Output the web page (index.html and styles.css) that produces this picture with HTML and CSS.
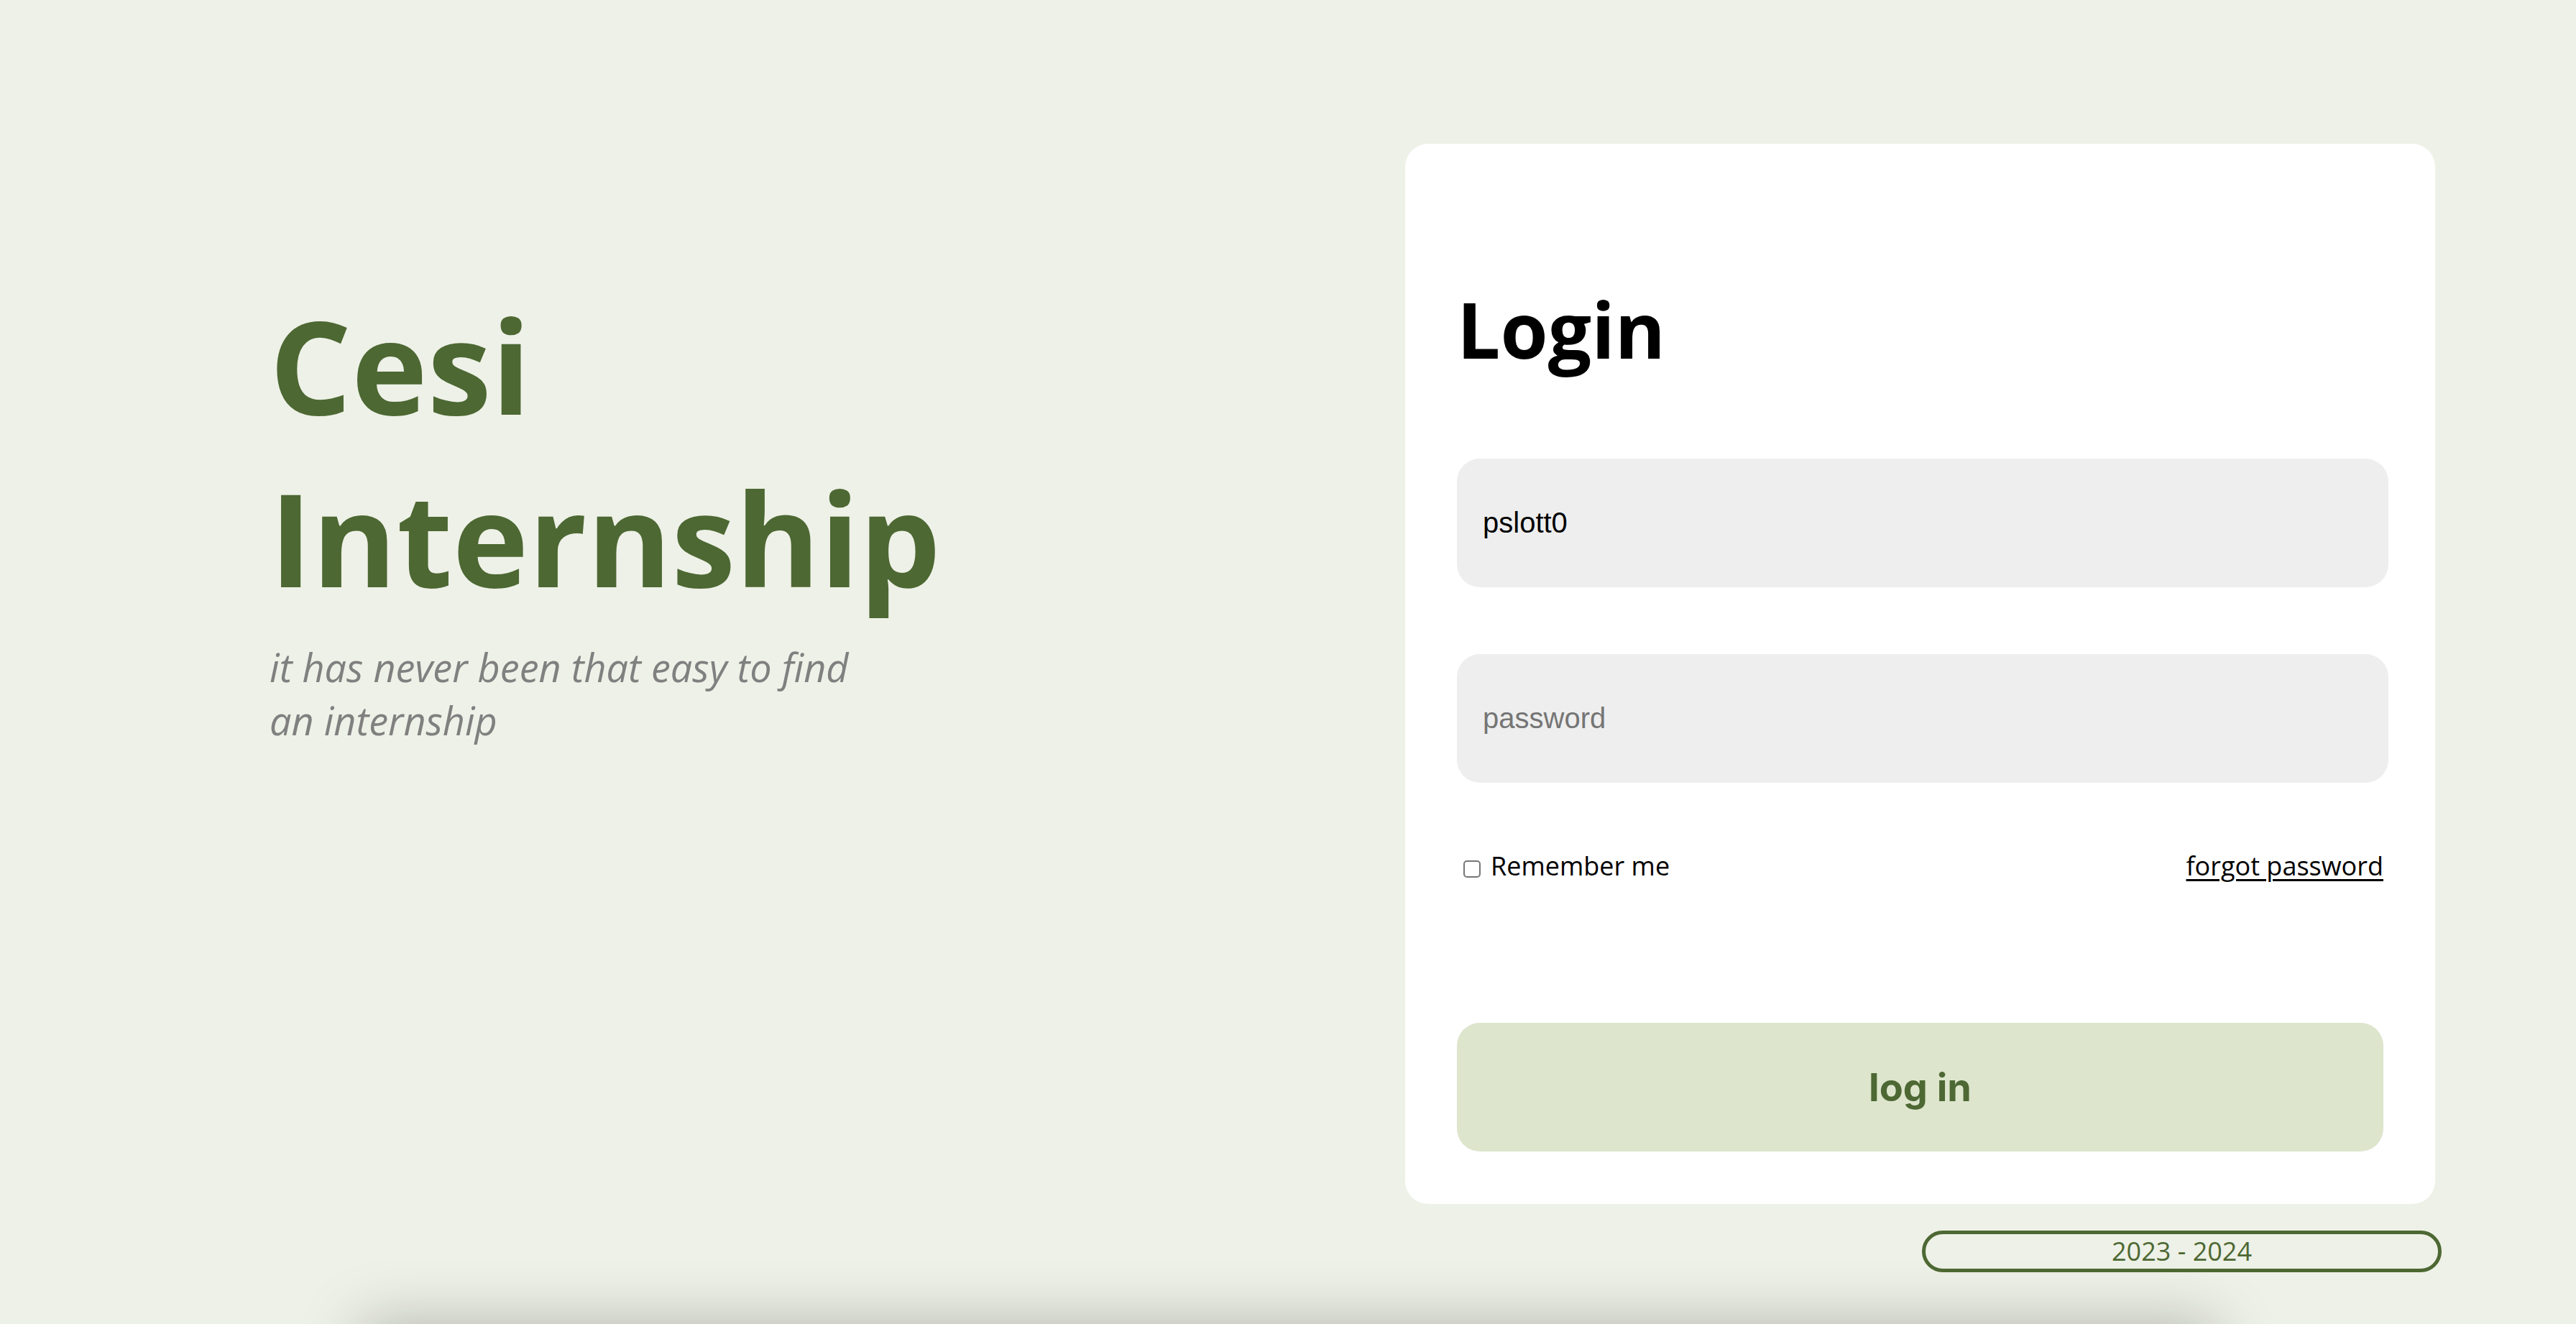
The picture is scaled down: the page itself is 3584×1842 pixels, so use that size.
FILE: index.html
```html
<!DOCTYPE html>
<html lang="en">
<head>
<meta charset="utf-8">
<title>Cesi Internship - Login</title>
<link rel="stylesheet" href="styles.css">
</head>
<body>
<main class="hero">
  <section class="intro">
    <h1 class="brand">Cesi<br>Internship</h1>
    <p class="tagline">it has never been that easy to find an internship</p>
  </section>
  <section class="side">
    <form class="card">
      <h2 class="card-title">Login</h2>
      <input class="field" type="text" value="pslott0">
      <input class="field" type="password" placeholder="password">
      <div class="options">
        <label class="remember"><input class="check" type="checkbox"><span>Remember me</span></label>
        <a class="forgot" href="#">forgot password</a>
      </div>
      <button class="submit" type="button">log in</button>
    </form>
    <div class="year">2023 - 2024</div>
  </section>
</main>
<footer class="fold"></footer>
</body>
</html>
```

FILE: styles.css
```css
* { box-sizing: border-box; }

html, body {
  margin: 0;
  padding: 0;
  background: #eef1e7;
  font-family: "Open Sans", "Noto Sans", sans-serif;
}

.hero {
  display: flex;
  height: 1842px;
}

.intro {
  flex: 1;
  padding: 388px 0 0 375px;
}

.brand {
  margin: 0;
  font-size: 179px;
  font-weight: 700;
  line-height: 240px;
  color: #4d6833;
}

.tagline {
  margin: 24px 0 0;
  max-width: 840px;
  font-size: 54px;
  font-style: italic;
  line-height: 73.5px;
  color: #808080;
}

.side {
  display: flex;
  flex-direction: column;
  width: 1442px;
  margin: 200px 187px 0 0;
}

.card {
  display: flex;
  flex-direction: column;
  width: 1433px;
  height: 1475px;
  padding: 183px 72px 73px;
  background: #ffffff;
  border-radius: 32px;
}

.card-title {
  margin: 0;
  font-size: 107px;
  font-weight: 700;
  line-height: 150px;
  color: #000000;
}

.field {
  width: calc(100% + 7px);
  height: 179px;
  margin: 105px 0 0;
  padding: 0 36px;
  border: none;
  border-radius: 32px;
  background: #eeeeee;
  font-family: "Liberation Sans", Arial, sans-serif;
  font-size: 40px;
  color: #000000;
  outline: none;
}

.field + .field { margin-top: 93px; }

.field::placeholder { color: #757575; }

.options {
  display: flex;
  justify-content: space-between;
  align-items: center;
  margin-top: 91px;
  height: 49px;
  font-size: 36px;
  line-height: 49px;
}

.remember {
  display: flex;
  align-items: center;
  gap: 14px;
  color: #000000;
}

.check {
  appearance: none;
  -webkit-appearance: none;
  width: 24px;
  height: 24px;
  margin: 8px 0 0 9px;
  border: 2px solid #767676;
  border-radius: 5px;
  background: #ffffff;
}

.forgot {
  color: #000000;
  text-decoration: underline;
  text-underline-offset: 5px;
  text-decoration-thickness: 3px;
}

.submit {
  margin-top: 194px;
  width: 100%;
  height: 179px;
  border: none;
  border-radius: 32px;
  background: #dde5cd;
  font-family: Inter, "Liberation Sans", sans-serif;
  font-size: 54px;
  font-weight: 700;
  color: #4d6833;
}

.year {
  align-self: flex-end;
  width: 723px;
  height: 58px;
  margin-top: 37px;
  border: 5px solid #4d6833;
  border-radius: 29px;
  text-align: center;
  font-size: 36px;
  line-height: 48px;
  color: #4d6833;
}

.fold {
  width: 2580px;
  height: 400px;
  margin: 0 auto;
  background: #eef1e7;
  box-shadow: 0 0 80px rgba(0, 0, 0, 0.25);
}
```
